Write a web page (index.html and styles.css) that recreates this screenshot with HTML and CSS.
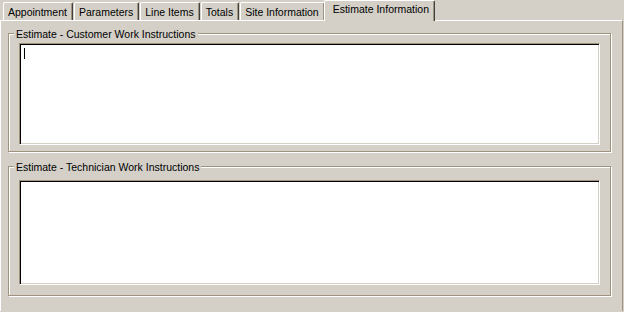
FILE: index.html
```html
<!DOCTYPE html>
<html lang="en">
<head>
  <meta charset="UTF-8">
  <title>Estimate Information</title>
  <link rel="stylesheet" href="styles.css">
</head>
<body>
  <div class="window">
    <div class="tabs">
      <div class="tab">Appointment</div>
      <div class="tab">Parameters</div>
      <div class="tab">Line Items</div>
      <div class="tab">Totals</div>
      <div class="tab">Site Information</div>
      <div class="tab active">Estimate Information</div>
    </div>
    <div class="panel">
      <div class="group group-customer">
        <span class="group-label">Estimate - Customer Work Instructions</span>
        <div class="memo memo-customer"><span class="caret"></span></div>
      </div>
      <div class="group group-technician">
        <span class="group-label">Estimate - Technician Work Instructions</span>
        <div class="memo memo-technician"></div>
      </div>
    </div>
  </div>
</body>
</html>
```

FILE: styles.css
```css
body {
  margin: 0;
  background-color: #d4d0c8;
  font-family: "Liberation Sans", Arial, sans-serif;
  font-size: 10.5px;
  color: #000;
}
.window {
  width: 623px;
  height: 311px;
  overflow: hidden;
}
.tabs {
  display: flex;
  align-items: flex-end;
  height: 20px;
  padding-left: 3px;
}
.tab {
  height: 17px;
  line-height: 18px;
  padding: 0 5px 0 4px;
  margin-right: 1px;
  border-top: 1px solid #fff;
  border-left: 1px solid #fff;
  border-right: 1px solid #404040;
  border-radius: 2px 2px 0 0;
  box-shadow: inset -1px 0 0 #a0937d;
  white-space: nowrap;
}
.tab.active {
  position: relative;
  z-index: 1;
  height: 20px;
  line-height: 16px;
  margin-left: -2px;
  margin-bottom: -1px;
  padding: 0 5px 0 8px;
  background-color: #d4d0c8;
}
.panel {
  height: 278px;
  padding: 12px 11px 0 7px;
  border-top: 1px solid #fff;
  border-left: 1px solid #fff;
  border-right: 1px solid #a0937d;
  border-bottom: 1px solid #a0937d;
}
.group {
  position: relative;
  width: 581px;
  border: 1px solid #a0937d;
  box-shadow: inset 1px 1px 0 #fff, 1px 1px 0 #fff;
  padding: 0 10px;
}
.group-customer {
  padding-top: 9px;
  padding-bottom: 6px;
}
.group-technician {
  margin-top: 14px;
  padding-top: 13px;
  padding-bottom: 10px;
}
.group-label {
  position: absolute;
  top: -7px;
  left: 5px;
  padding: 0 2px;
  line-height: 14px;
  background-color: #d4d0c8;
  white-space: nowrap;
}
.memo {
  background-color: #fff;
  border-top: 1px solid #a0937d;
  border-left: 1px solid #a0937d;
  border-right: 1px solid #fff;
  border-bottom: 1px solid #fff;
  box-shadow: inset 1px 1px 0 #000, inset -1px -1px 0 #d4d0c8;
  padding: 4px 3px;
  box-sizing: border-box;
}
.memo-customer {
  height: 102px;
}
.memo-technician {
  height: 105px;
}
.caret {
  display: block;
  width: 0;
  height: 11px;
  border-left: 1px solid #000;
  margin-left: 1px;
}
```
